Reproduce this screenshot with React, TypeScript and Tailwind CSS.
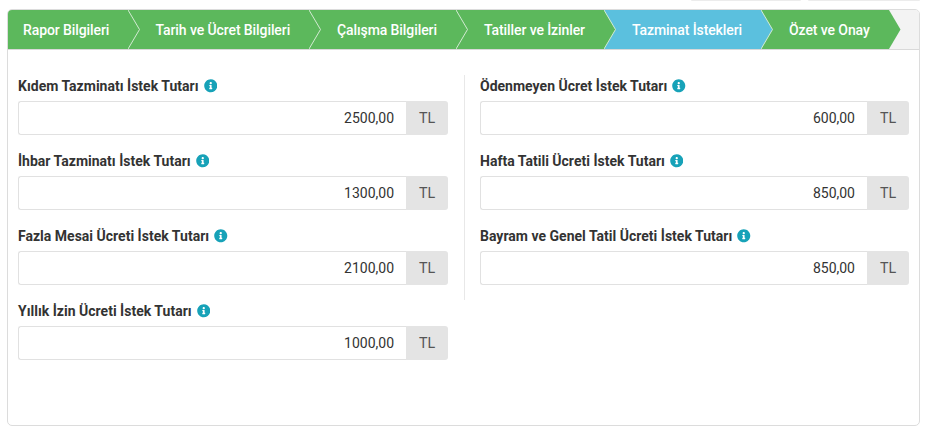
import React from "react";
import { FaInfoCircle } from "react-icons/fa";

const GREEN = "#5cb85c";
const BLUE = "#5bc0de";
const REST = "#f3f3f3";

type Step = { label: string; width: string; color: string; next: string; line: string };

const steps: Step[] = [
  { label: "Rapor Bilgileri", width: "w-[120px] pl-[15px]", color: GREEN, next: GREEN, line: "#d3ead3" },
  { label: "Tarih ve Ücret Bilgileri", width: "w-[169px] pl-[15.5px]", color: GREEN, next: GREEN, line: "#d3ead3" },
  { label: "Çalışma Bilgileri", width: "w-[135px] pl-4", color: GREEN, next: GREEN, line: "#d3ead3" },
  { label: "Tatiller ve İzinler", width: "w-[136px] pl-4", color: GREEN, next: BLUE, line: "#d3ead3" },
  { label: "Tazminat İstekleri", width: "w-[145px] pl-4", color: BLUE, next: GREEN, line: "#d3ead3" },
  { label: "Özet ve Onay", width: "w-[116px] pl-4", color: GREEN, next: REST, line: "none" },
];

function Chevron({ color, next, line }: { color: string; next: string; line: string }) {
  return (
    <svg className="block h-full w-3 shrink-0" viewBox="0 0 12 39" preserveAspectRatio="none">
      <rect width="12" height="39" fill={next} />
      <path d="M0 0L11.5 19.5L0 39Z" fill={color} />
      <path d="M0 0L11.5 19.5L0 39" fill="none" stroke={line} strokeWidth="1" />
    </svg>
  );
}

function Field({ label, value }: { label: string; value: string }) {
  return (
    <div className="h-[75px]">
      <div className="flex h-[26px] items-start gap-[5px] leading-[22px] font-bold tracking-[0.01px] text-[#333]">
        <span className="whitespace-nowrap">{label}</span>
        <FaInfoCircle className="mt-1 size-[13.5px] text-[#17a2b8]" />
      </div>
      <div className="flex h-[34px]">
        <div className="flex flex-1 items-center justify-end rounded-l-[3px] border border-r-0 border-[#e1e1e1] pt-px pr-3 text-[#333]">
          {value}
        </div>
        <div className="flex w-[42px] items-center justify-center rounded-r-[3px] bg-[#e4e4e4] pt-px text-[14.3px] text-[#555]">
          TL
        </div>
      </div>
    </div>
  );
}

export default function App() {
  return (
    <div className="h-[434px] w-[930px] overflow-hidden bg-white font-['Roboto',sans-serif] text-[14px]">
      <div className="flex h-[9px] items-start justify-end gap-[7px] pr-[10px]">
        <div className="h-px w-[110px] rounded-b bg-[#ececec]" />
        <div className="h-px w-[112px] rounded-b bg-[#ececec]" />
      </div>
      <div className="ml-[7px] h-[417px] w-[913px] overflow-hidden rounded-[5px] border border-[#dcdcdc]">
        <div className="flex h-10 border-b border-[#d9d9d9] bg-[#f3f3f3]">
          {steps.map((s) => (
            <React.Fragment key={s.label}>
              <div
                className={`flex shrink-0 items-center pt-px font-medium tracking-[-0.09px] whitespace-nowrap text-white ${s.width}`}
                style={{ backgroundColor: s.color }}
              >
                {s.label}
              </div>
              <Chevron color={s.color} next={s.next} line={s.line} />
            </React.Fragment>
          ))}
        </div>
        <div className="flex items-start pt-[25px] pl-[10px]">
          <div className="w-[430px]">
            <Field label="Kıdem Tazminatı İstek Tutarı" value="2500,00" />
            <Field label="İhbar Tazminatı İstek Tutarı" value="1300,00" />
            <Field label="Fazla Mesai Ücreti İstek Tutarı" value="2100,00" />
            <Field label="Yıllık İzin Ücreti İstek Tutarı" value="1000,00" />
          </div>
          <div className="ml-4 w-[445px] border-l border-[#e8e8e8] pl-[15px]">
            <Field label="Ödenmeyen Ücret İstek Tutarı" value="600,00" />
            <Field label="Hafta Tatili Ücreti İstek Tutarı" value="850,00" />
            <Field label="Bayram ve Genel Tatil Ücreti İstek Tutarı" value="850,00" />
          </div>
        </div>
      </div>
    </div>
  );
}
